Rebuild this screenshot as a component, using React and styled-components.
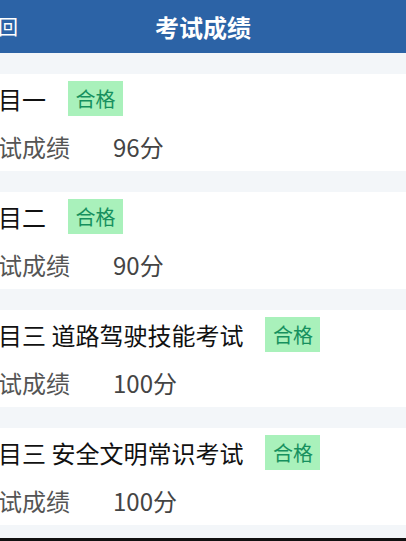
import React from "react";
import styled, { createGlobalStyle } from "styled-components";

const GlobalStyle = createGlobalStyle`
  html, body { margin: 0; padding: 0; }
  body {
    font-family: "Noto Sans CJK SC", "Noto Sans", sans-serif;
    overflow: hidden;
  }
`;

const Page = styled.div`
  width: 406px;
  height: 541px;
  background: #f3f6f9;
  display: flex;
  flex-direction: column;
  overflow: hidden;
`;

const Header = styled.header`
  height: 53px;
  flex: 0 0 53px;
  background: #2c63a6;
  display: grid;
  grid-template-columns: 1fr auto 1fr;
  align-items: center;
  color: #fff;
`;

const Back = styled.span`
  font-size: 20px;
  margin-left: -22px;
  justify-self: start;
`;

const Title = styled.h1`
  margin: 0;
  font-size: 24px;
  font-weight: 700;
`;

const List = styled.main`
  flex: 1;
  display: flex;
  flex-direction: column;
  gap: 21px;
  padding-top: 21px;
`;

const Card = styled.section`
  background: #fff;
  height: 97px;
  display: grid;
  grid-template-rows: 49px 48px;
`;

const Row = styled.div`
  display: flex;
  align-items: center;
  margin-left: -26px;
  font-size: 24px;
  line-height: 1;
`;

const Name = styled.span`
  color: #111;
  white-space: pre;
`;

const Badge = styled.span`
  margin-left: 22px;
  height: 35px;
  padding: 0 7.5px;
  display: inline-flex;
  align-items: center;
  background: #a9f1bb;
  color: #16905e;
  font-size: 20px;
`;

const Label = styled.span`
  width: 139px;
  color: #555;
`;

const Score = styled.span`
  color: #444;
`;

const BottomEdge = styled.div`
  height: 3px;
  flex: 0 0 3px;
  background: #111;
`;

const results = [
  { name: "科目一", score: 96 },
  { name: "科目二", score: 90 },
  { name: "科目三 道路驾驶技能考试", score: 100 },
  { name: "科目三 安全文明常识考试", score: 100 },
];

export default function App() {
  return (
    <>
      <GlobalStyle />
      <Page>
        <Header>
          <Back>返回</Back>
          <Title>考试成绩</Title>
          <span />
        </Header>
        <List>
          {results.map((r) => (
            <Card key={r.name}>
              <Row>
                <Name>{r.name}</Name>
                <Badge>合格</Badge>
              </Row>
              <Row>
                <Label>考试成绩</Label>
                <Score>{r.score}分</Score>
              </Row>
            </Card>
          ))}
        </List>
        <BottomEdge />
      </Page>
    </>
  );
}
